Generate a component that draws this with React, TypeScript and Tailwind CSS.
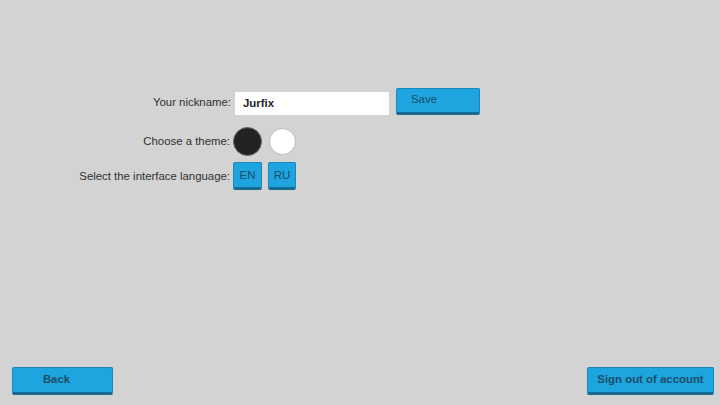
import React, { useState } from 'react';

const btn =
  'bg-[#1ea4df] border border-[#1b86b8] border-b-[3px] border-b-[#186c93] text-[#1c4e66] rounded-[2px]';

const App: React.FC = () => {
  const [nick, setNick] = useState('Jurfix');
  const [theme, setTheme] = useState<'dark' | 'light'>('dark');

  return (
    <div className="w-[720px] h-[405px] bg-[#d3d3d3] flex flex-col font-['Liberation_Sans',Arial,sans-serif] text-[11.4px] text-[#303030]">
      <div className="flex-1 pt-[88px]">
        <div className="flex items-center h-[27px]">
          <span className="w-[231px] text-right pt-[3px]">Your nickname:</span>
          <input
            value={nick}
            onChange={(e) => setNick(e.target.value)}
            className="ml-[4px] w-[154px] h-[23px] mt-[3px] bg-white px-[8px] font-bold text-[#222] outline-none"
          />
          <button className={`${btn} ml-[7px] w-[84px] h-[27px] text-left pl-[14px] pb-[1px]`}>Save</button>
        </div>
        <div className="flex items-center mt-[12px] h-[29px]">
          <span className="w-[230px] text-right pt-[1px]">Choose a theme:</span>
          <button
            onClick={() => setTheme('dark')}
            className={`ml-[3px] w-[29px] h-[29px] rounded-full bg-[#222] border ${theme === 'dark' ? 'border-[#666]' : 'border-[#444]'}`}
          />
          <button
            onClick={() => setTheme('light')}
            className="ml-[7px] w-[27px] h-[27px] rounded-full bg-white border border-[#bbb]"
          />
        </div>
        <div className="flex items-center mt-[6px] h-[28px]">
          <span className="w-[230px] text-right pt-[1px]">Select the interface language:</span>
          <button className={`${btn} ml-[3px] w-[29px] h-[28px] text-[11.5px] pt-[1px]`}>EN</button>
          <button className={`${btn} ml-[6px] w-[28px] h-[28px] text-[11.5px] pt-[1px]`}>RU</button>
        </div>
      </div>
      <div className="flex justify-between px-[6px] pb-[10px] pl-[12px]">
        <button className={`${btn} w-[101px] h-[28px] font-bold pr-[12px]`}>Back</button>
        <button className={`${btn} w-[127px] h-[28px] font-bold`}>Sign out of account</button>
      </div>
    </div>
  );
};

export default App;
